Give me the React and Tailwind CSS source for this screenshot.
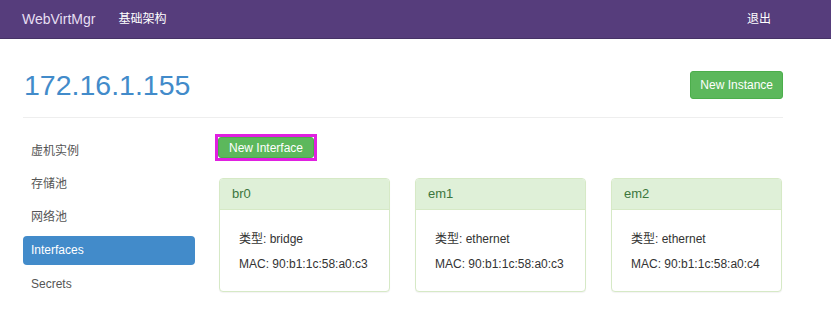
import React from 'react';

const ifaces = [
  { name: 'br0', type: 'bridge', mac: '90:b1:1c:58:a0:c3' },
  { name: 'em1', type: 'ethernet', mac: '90:b1:1c:58:a0:c3' },
  { name: 'em2', type: 'ethernet', mac: '90:b1:1c:58:a0:c4' },
];

const menu = ['虚机实例', '存储池', '网络池', 'Interfaces', 'Secrets'];

function InterfaceCard({ iface }) {
  return (
    <div className="w-[171px] border border-[#d6e9c6] rounded-[4px] bg-white shadow-[0_1px_1px_rgba(0,0,0,0.05)]">
      <div className="h-[31px] flex items-center px-[12px] bg-[#dff0d8] border-b border-[#d6e9c6] rounded-t-[3px] text-[13px] text-[#3c763d]">
        {iface.name}
      </div>
      <div className="px-[19px] pt-[19px] pb-[17px] text-[12px] leading-[20px] text-[#333] flex flex-col gap-[5px]">
        <div>类型: {iface.type}</div>
        <div>MAC: {iface.mac}</div>
      </div>
    </div>
  );
}

export default function App() {
  return (
    <div className="w-[831px] h-[310px] bg-white overflow-hidden font-['Liberation_Sans','Noto_Sans_CJK_SC',sans-serif]">
      <nav className="h-[39px] bg-[#563d7c] border-b border-[#463266] flex items-center text-[14px]">
        <span className="ml-[22px] text-[#e6dff2]">WebVirtMgr</span>
        <span className="ml-[23px] text-white text-[12px]">基础架构</span>
        <span className="ml-auto mr-[60px] text-white text-[12px]">退出</span>
      </nav>

      <div className="mx-[23px] w-[760px]">
        <div className="mt-[32px] h-[28px] flex items-center justify-between">
          <h1 className="text-[28.5px] leading-[28px] text-[#428bca] pl-[1px]">172.16.1.155</h1>
          <button className="h-[28px] px-[9px] rounded-[3px] bg-[#5cb85c] border border-[#4cae4c] text-white text-[12px]">
            New Instance
          </button>
        </div>
        <div className="mt-[18px] border-t border-[#eee]" />

        <div className="flex gap-[24px]">
          <ul className="w-[172px] mt-[18px] flex flex-col gap-[4.33px]">
            {menu.map((m) => (
              <li
                key={m}
                className={
                  m === 'Interfaces'
                    ? 'h-[29px] flex items-center px-[8px] rounded-[4px] bg-[#428bca] text-white text-[12px]'
                    : 'h-[29px] flex items-center px-[8px] text-[#555] text-[12px]'
                }
              >
                {m}
              </li>
            ))}
          </ul>

          <div className="flex-1">
            <div className="mt-[16px] -ml-[4px] inline-flex border-[3px] border-[#e020e0]">
              <button className="h-[21px] w-[96px] rounded-[3px] bg-[#5cb85c] border border-[#4cae4c] text-white text-[12px] leading-none">
                New Interface
              </button>
            </div>
            <div className="mt-[17px] flex gap-[25px]">
              {ifaces.map((i) => (
                <InterfaceCard key={i.name} iface={i} />
              ))}
            </div>
          </div>
        </div>
      </div>
    </div>
  );
}
